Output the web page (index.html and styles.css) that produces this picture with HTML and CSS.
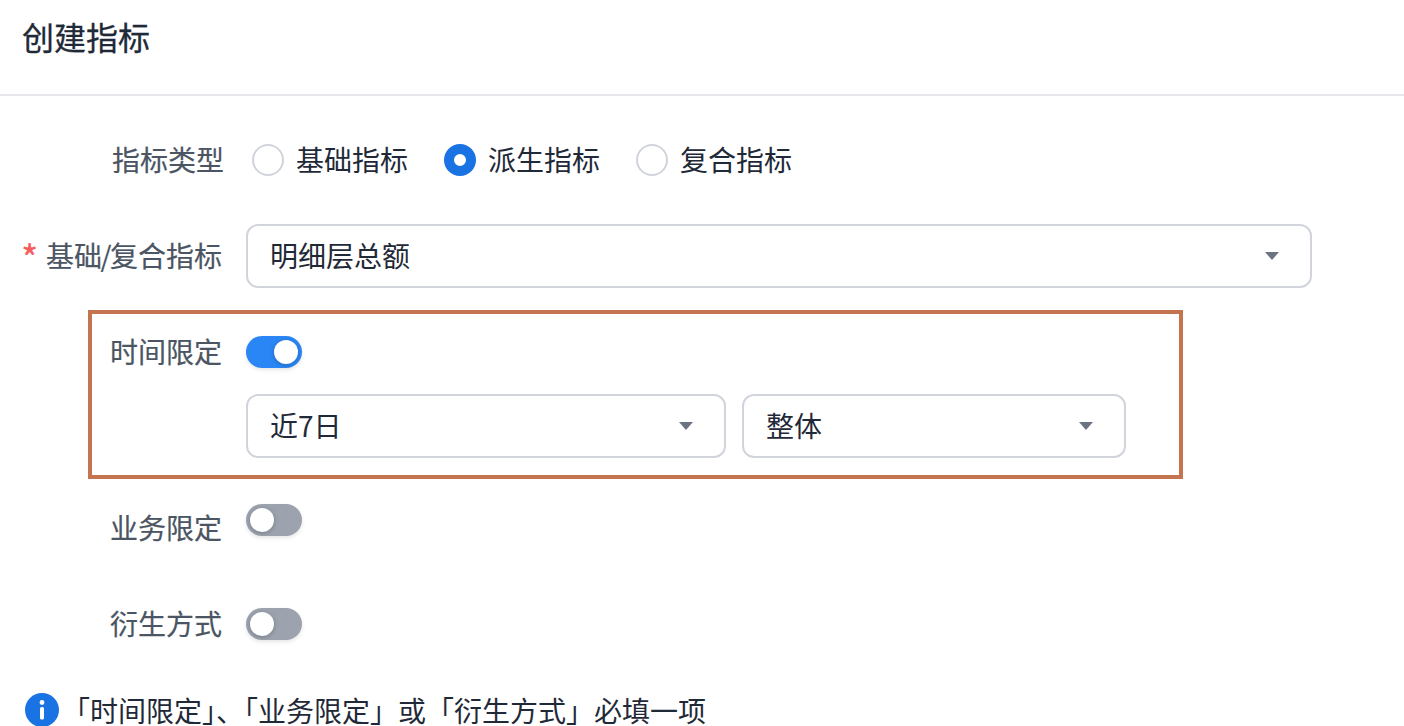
FILE: index.html
```html
<!DOCTYPE html>
<html lang="zh-CN">
  <head>
    <meta charset="UTF-8" />
    <title>创建指标</title>
    <link rel="stylesheet" href="styles.css">
  </head>
  <body>
    <header class="page-header">
      <h1>创建指标</h1>
    </header>
    <form class="metric-form">
      <!-- type -->
      <div class="row row-type">
        <span class="label label-type">指标类型</span>
        <div class="radio-group">
          <div class="radio-item"><span class="radio"></span><span class="text">基础指标</span></div>
          <div class="radio-item"><span class="radio radio-on"></span><span class="text">派生指标</span></div>
          <div class="radio-item"><span class="radio"></span><span class="text">复合指标</span></div>
        </div>
      </div>
      <!-- base metric -->
      <div class="row row-base">
        <span class="label"><i class="required">*</i>基础<span class="slash">/</span>复合指标</span>
        <div class="select select-full">
          <span class="text">明细层总额</span>
          <span class="caret"></span>
        </div>
      </div>
      <!-- time limit -->
      <div class="time-box">
        <div class="box-row">
          <span class="label label-box">时间限定</span>
          <span class="switch switch-on"><span class="knob"></span></span>
        </div>
        <div class="select-row">
          <div class="select select-range">
            <span class="text">近7日</span>
            <span class="caret"></span>
          </div>
          <div class="select select-scope">
            <span class="text">整体</span>
            <span class="caret"></span>
          </div>
        </div>
      </div>
      <div class="row row-business">
        <span class="label">业务限定</span>
        <span class="switch"><span class="knob"></span></span>
      </div>
      <div class="row row-derive">
        <span class="label">衍生方式</span>
        <span class="switch"><span class="knob"></span></span>
      </div>
      <div class="notice">
        <svg class="notice-icon" viewBox="0 0 34 34" aria-hidden="true">
          <circle cx="17" cy="17" r="17" fill="#1a73e3" />
          <circle cx="17" cy="9.5" r="2.4" fill="#fff" />
          <rect x="15" y="14" width="4" height="12.5" rx="1.5" fill="#fff" />
        </svg>
        <span class="notice-text">「时间限定」、「业务限定」或「衍生方式」必填一项</span>
      </div>
    </form>
  </body>
</html>
```

FILE: styles.css
```css
* {
  margin: 0;
  padding: 0;
  box-sizing: border-box;
}

html,
body {
  height: 726px;
  overflow: hidden;
}

body {
  font-family: "Noto Sans CJK SC", "Noto Sans", sans-serif;
  font-size: 28px;
  line-height: 40px;
  color: #1f2937;
  background-color: #fff;
}

.page-header {
  height: 96px;
  padding: 14px 0 0 22px;
  border-bottom: 2px solid #e5e7eb;
}

.page-header h1 {
  font-size: 32px;
  font-weight: 400;
  line-height: 44px;
  -webkit-text-stroke: 0.3px #1f2937;
}

.metric-form {
  padding-top: 32px;
}

.row {
  display: flex;
  align-items: center;
  gap: 24px;
}

.label {
  flex: none;
  width: 222px;
  padding-bottom: 2px;
  text-align: right;
  color: #4b5563;
  -webkit-text-stroke: 0.2px #4b5563;
}

.text {
  padding-bottom: 2px;
}

.label-type {
  width: 224px;
}

.required {
  font-style: normal;
  font-size: 36px;
  line-height: 0;
  vertical-align: -5px;
  color: #f65c5c;
  -webkit-text-stroke: 0.4px #f65c5c;
  margin-right: 8px;
}

.slash {
  margin: 0 -1.5px;
}

.row-type {
  height: 64px;
  gap: 28px;
}

.radio-group {
  display: flex;
  gap: 36px;
}

.radio-item {
  display: flex;
  align-items: center;
  gap: 12px;
}

.radio {
  width: 32px;
  height: 32px;
  border: 2px solid #d1d5db;
  border-radius: 50%;
}

.radio-on {
  border: 10px solid #1a73e3;
}

.row-base {
  margin-top: 32px;
}

.select {
  display: flex;
  align-items: center;
  justify-content: space-between;
  height: 64px;
  padding: 0 31px 0 22px;
  border: 2px solid #d1d5db;
  border-radius: 12px;
}

.select-full {
  width: 1066px;
}

.select-range {
  width: 480px;
}

.select-scope {
  width: 384px;
}

.caret {
  width: 0;
  height: 0;
  border-left: 7px solid transparent;
  border-right: 7px solid transparent;
  border-top: 8px solid #6b7280;
}

.time-box {
  width: 1095px;
  height: 169px;
  margin: 22px 0 0 88px;
  padding: 22px 0 0 0;
  border: 4px solid #c4744f;
}

.box-row {
  display: flex;
  align-items: center;
  gap: 24px;
  height: 32px;
}

.label-box {
  width: 130px;
}

.select-row {
  display: flex;
  gap: 16px;
  margin: 26px 0 0 154px;
}

.switch {
  flex: none;
  display: flex;
  align-items: center;
  width: 56px;
  height: 32px;
  padding: 0 4px;
  border-radius: 16px;
  background-color: #9ca3af;
  box-shadow: 0 2px 4px rgba(0, 0, 0, 0.1);
}

.switch-on {
  justify-content: flex-end;
  background-color: #2b86f5;
}

.knob {
  width: 24px;
  height: 24px;
  border-radius: 50%;
  background-color: #fff;
  box-shadow: 0 1px 4px rgba(0, 0, 0, 0.25);
}

.row-business {
  align-items: flex-start;
  margin-top: 25px;
}

.row-business .label {
  margin-top: 3px;
}

.row-derive {
  margin-top: 54px;
}

.notice {
  display: flex;
  align-items: center;
  gap: 3px;
  margin: 48px 0 0 25px;
  white-space: nowrap;
}

.notice-icon {
  flex: none;
  width: 34px;
  height: 34px;
}

.notice-text {
  line-height: 32px;
}
```
